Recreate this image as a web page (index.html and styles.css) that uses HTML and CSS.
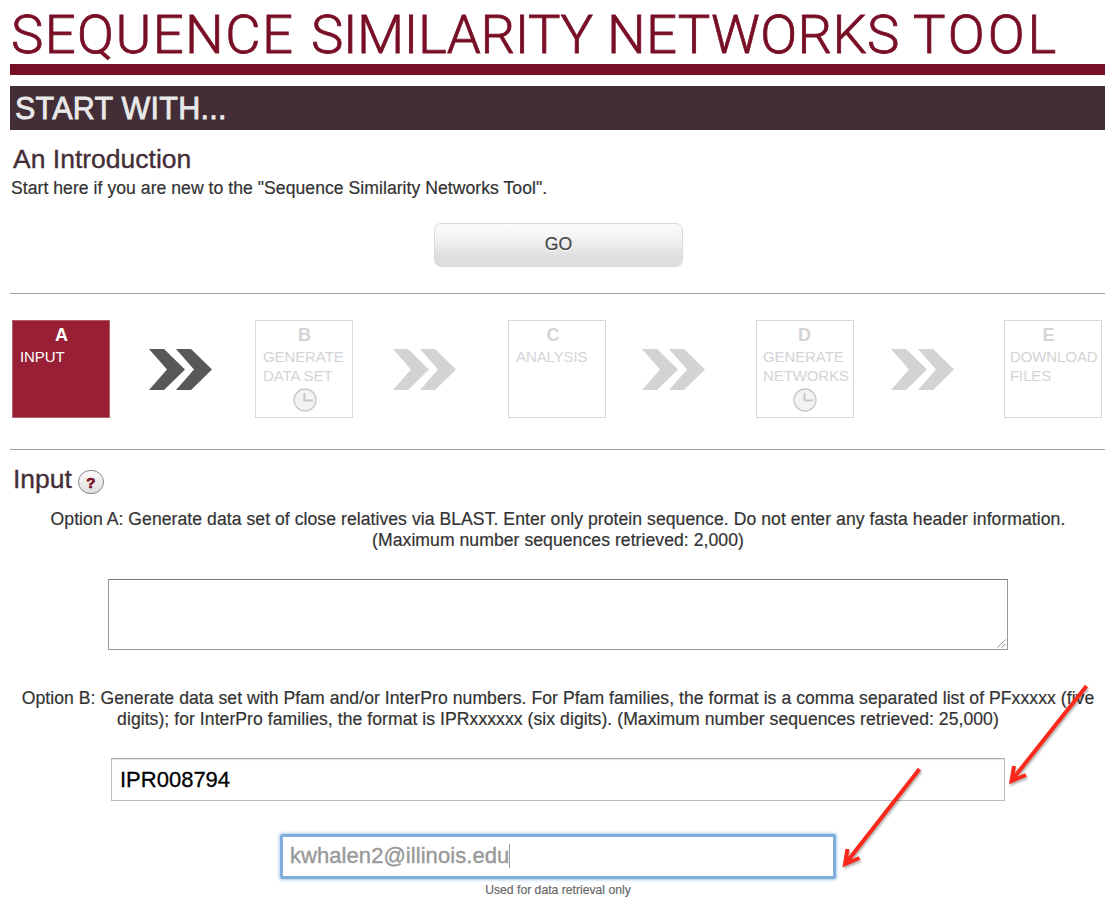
FILE: index.html
```html
<!DOCTYPE html>
<html lang="en">
<head>
<meta charset="utf-8">
<title>Sequence Similarity Networks Tool</title>
<link rel="stylesheet" href="styles.css">
</head>
<body>
<main class="page">
  <h1 class="title"><span class="w1">SEQUENCE</span> <span class="w2">SIMILARITY</span> <span class="w3">NETWORKS</span> <span class="w4">TOOL</span></h1>
  <div class="banner">START WITH...</div>
  <section class="intro">
    <h2 class="heading">An Introduction</h2>
    <p class="lead">Start here if you are new to the "Sequence Similarity Networks Tool".</p>
    <button class="go" type="button">GO</button>
  </section>

  <div class="steps">
    <div class="step active"><b class="letter">A</b><span class="label">INPUT</span></div>
    <svg class="chevrons dark" viewBox="0 0 63 41"><path d="M0 0H15L36 20.500L15 41H0L18 20.500ZM27 0H42L63 20.500L42 41H27L45 20.500Z"/></svg>
    <div class="step"><b class="letter">B</b><span class="label">GENERATE<br>DATA SET</span>
      <svg class="clock" viewBox="0 0 24 24"><circle cx="12" cy="12" r="11"/><path d="M11.500 5V12.500H20"/></svg></div>
    <svg class="chevrons" viewBox="0 0 63 41"><path d="M0 0H15L36 20.500L15 41H0L18 20.500ZM27 0H42L63 20.500L42 41H27L45 20.500Z"/></svg>
    <div class="step"><b class="letter letter-c">C</b><span class="label">ANALYSIS</span></div>
    <svg class="chevrons third" viewBox="0 0 63 41"><path d="M0 0H15L36 20.500L15 41H0L18 20.500ZM27 0H42L63 20.500L42 41H27L45 20.500Z"/></svg>
    <div class="step step-d"><b class="letter">D</b><span class="label">GENERATE<br>NETWORKS</span>
      <svg class="clock" viewBox="0 0 24 24"><circle cx="12" cy="12" r="11"/><path d="M11.500 5V12.500H20"/></svg></div>
    <svg class="chevrons fourth" viewBox="0 0 63 41"><path d="M0 0H15L36 20.500L15 41H0L18 20.500ZM27 0H42L63 20.500L42 41H27L45 20.500Z"/></svg>
    <div class="step last"><b class="letter letter-e">E</b><span class="label">DOWNLOAD<br>FILES</span></div>
  </div>

  <section class="form">
    <div class="form-head"><h2 class="heading">Input</h2><span class="help">?</span></div>
    <p class="option">Option A: Generate data set of close relatives via BLAST. Enter only protein sequence. Do not enter any fasta header information.<br>(Maximum number sequences retrieved: 2,000)</p>
    <div class="sequence"><svg class="grip" viewBox="0 0 10 10"><path d="M.5 9.500L9.500 .5M5.500 9.500L9.500 5.500"/></svg></div>
    <p class="option">Option B: Generate data set with Pfam and/or InterPro numbers. For Pfam families, the format is a comma separated list of PFxxxxx (five<br>digits); for InterPro families, the format is IPRxxxxxx (six digits). (Maximum number sequences retrieved: 25,000)</p>
    <div class="family">IPR008794</div>
    <div class="email">kwhalen2@illinois.edu<span class="caret"></span></div>
    <p class="note">Used for data retrieval only</p>
  </section>
</main>
<svg class="pointers" viewBox="0 0 1113 899">
  <path d="M1086.500 686L1012 780M1014 766L1011.500 781L1026 775"/>
  <path d="M919.500 769L846 863M847.500 849L845 864L859.500 858"/>
</svg>
</body>
</html>
```
FILE: styles.css
```css
* { box-sizing: border-box; }
body {
  margin: 0;
  background: #fff;
  color: #333;
  font-family: "Liberation Sans", Arial, sans-serif;
  font-size: 17.6px;
  overflow: hidden;
}
h1, h2, p { margin: 0; font-weight: normal; }
.page { width: 1095px; height: 899px; margin-left: 10px; }
.title {
  display: grid;
  grid-template-columns: 300px 296px 306px 190px;
  height: 75px;
  padding-left: 1px;
  border-bottom: 11px solid #780f26;
  color: #780f26;
  font: 300 54.500px/68px Roboto, sans-serif;
  white-space: nowrap;
  -webkit-text-stroke: .8px #780f26;
}
.w1 { letter-spacing: 1.400px; }
.w2 { letter-spacing: -.400px; }
.w3 { letter-spacing: .300px; }
.w4 { letter-spacing: 3px; }
.banner {
  height: 44px;
  margin-top: 11px;
  padding-left: 5px;
  background: #432d36;
  color: #e9e9e9;
  font-size: 30.500px;
  letter-spacing: .25px;
  line-height: 44px;
  -webkit-text-stroke: .8px #e9e9e9;
}
.intro {
  display: flex;
  flex-direction: column;
  height: 164px;
  padding-top: 14px;
  border-bottom: 1px solid #a0a0a0;
}
.heading { padding-left: 3px; color: #432d36; font-size: 26.500px; line-height: 31px; -webkit-text-stroke: .35px; }
.lead { padding-left: 1px; line-height: 26px; letter-spacing: .04px; white-space: nowrap; -webkit-text-stroke: .2px; }
.go {
  align-self: center;
  width: 249px;
  height: 44px;
  margin: 22px 0 0 2px;
  padding: 0 0 1px;
  border: 1px solid #d9d9d9;
  border-radius: 7px;
  background: linear-gradient(#fafafa 0%, #f6f6f6 25%, #dedede 80%, #dedede 100%);
  color: #444;
  font: 17.600px "Liberation Sans", Arial, sans-serif;
  text-shadow: 0 1px 1px #fff;
  -webkit-text-stroke: .2px;
}
.steps {
  display: grid;
  grid-template-columns: 98px 145px 98px 155px 98px 150px 98px 150px 98px;
  height: 156px;
  padding: 26px 0 0 2px;
  border-bottom: 1px solid #a0a0a0;
}
.step {
  display: flex;
  flex-direction: column;
  height: 98px;
  padding: 4px 0 0 7px;
  border: 1px solid #dadadb;
  color: #d3d4d6;
}
.step.active { background: #981f35; border-color: #b0606d; color: #fff; }
.step.step-d { padding-left: 6px; }
.step.last { padding-left: 5px; }
.letter { width: 83px; font-size: 18px; line-height: 20px; text-align: center; }
.letter-c { width: 74px; }
.letter-e { width: 77px; }
.label { margin-top: 2px; font-size: 15px; line-height: 19px; letter-spacing: -.1px; white-space: nowrap; }
.clock { width: 24px; height: 24px; margin: 3px 0 0 30px; fill: #f3f3f5; stroke: #c7c8ca; stroke-width: 1.300; }
.clock path { fill: none; stroke-width: 2; }
.chevrons { width: 63px; height: 41px; margin: 29px 0 0 40px; fill: #d2d3d5; }
.chevrons.dark { margin-left: 39px; fill: #58585a; }
.chevrons.third { margin-left: 36px; }
.chevrons.fourth { margin-left: 37px; }
.form { display: flex; flex-direction: column; align-items: center; padding-left: 1px; }
.form-head { display: flex; align-self: stretch; height: 59px; padding-top: 14px; gap: 6px; }
.form-head .heading { padding-left: 2px; }
.help {
  width: 26px;
  height: 24px;
  margin-top: 6px;
  border: 1px solid #888;
  border-radius: 12px;
  background: linear-gradient(#fbfbfb, #dedede);
  color: #780f26;
  font: bold 15px/23px "Liberation Sans", Arial, sans-serif;
  text-align: center;
  -webkit-text-stroke: .7px;
}
.option { line-height: 21px; letter-spacing: .05px; text-align: center; white-space: nowrap; -webkit-text-stroke: .2px; }
.sequence {
  display: flex;
  align-items: flex-end;
  justify-content: flex-end;
  width: 900px;
  height: 71px;
  margin: 28px 0 38px;
  padding: 1px;
  border: 1px solid #999;
  border-top-color: #777;
}
.grip { width: 9px; height: 9px; fill: none; stroke: #777; stroke-width: .9; }
.family {
  width: 894px;
  height: 43px;
  margin-top: 28px;
  padding-left: 8px;
  border: 1px solid #bbb;
  border-top-color: #aaa;
  box-shadow: inset 0 1px 1px #e4e4e4;
  color: #000;
  font-size: 22px;
  line-height: 41px;
  -webkit-text-stroke: .3px;
}
.email {
  display: flex;
  align-items: center;
  width: 556px;
  height: 45px;
  margin-top: 33px;
  padding: 0 0 2px 7px;
  border: 3px solid #80add9;
  border-radius: 2px;
  box-shadow: 0 0 3px 1px #a9cbea;
  color: #999;
  font-size: 22px;
  letter-spacing: .06px;
  -webkit-text-stroke: .4px;
}
.caret { width: 1px; height: 24px; background: #999; }
.note { margin-top: 4px; color: #666; font-size: 12.200px; line-height: 14px; white-space: nowrap; -webkit-text-stroke: .15px; }
.pointers {
  position: absolute;
  inset: 0;
  width: 1113px;
  height: 899px;
  fill: none;
  stroke: #fb291b;
  stroke-width: 4;
  stroke-linejoin: miter;
  pointer-events: none;
  filter: drop-shadow(1px 2px 1px rgba(0,0,0,.3));
}
```
